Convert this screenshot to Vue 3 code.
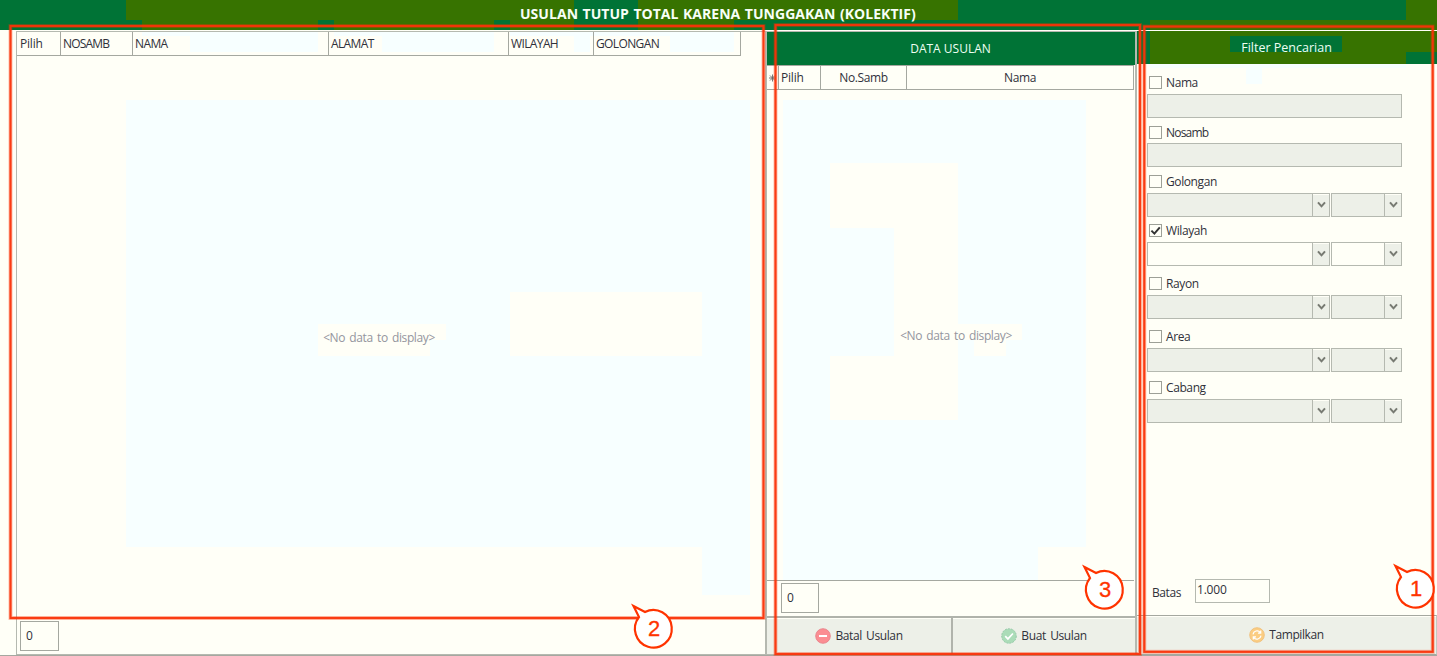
<script setup>
const columns = [
  { name: 'Pilih', cls: 'c-pilih' },
  { name: 'NOSAMB', cls: 'c-nosamb' },
  { name: 'NAMA', cls: 'c-nama' },
  { name: 'ALAMAT', cls: 'c-alamat' },
  { name: 'WILAYAH', cls: 'c-wilayah' },
  { name: 'GOLONGAN', cls: 'c-golongan' },
]

const filters = [
  { name: 'Nama', cls: 'f-nama', combo: false, checked: false },
  { name: 'Nosamb', cls: 'f-nosamb', combo: false, checked: false },
  { name: 'Golongan', cls: 'f-golongan', combo: true, checked: false },
  { name: 'Wilayah', cls: 'f-wilayah', combo: true, checked: true },
  { name: 'Rayon', cls: 'f-rayon', combo: true, checked: false },
  { name: 'Area', cls: 'f-area', combo: true, checked: false },
  { name: 'Cabang', cls: 'f-cabang', combo: true, checked: false },
]

// Background tint areas: x, y, width, height
const olive = [
  [126, 0, 448, 20], [142, 20, 176, 10], [334, 20, 160, 10], [510, 20, 64, 10],
  [638, 0, 320, 20], [638, 20, 96, 10], [1406, 0, 31, 20], [1150, 20, 287, 10],
  [1150, 31, 80, 33], [1230, 31, 112, 5], [1230, 52, 112, 12],
  [1342, 31, 64, 33], [1406, 31, 31, 21],
]
const ice = [
  [126, 100, 624, 447], [702, 547, 48, 48],
  [142, 32, 176, 4], [190, 36, 128, 16], [334, 32, 160, 4], [382, 36, 112, 16],
  [510, 32, 224, 4], [574, 36, 16, 16], [670, 36, 64, 16],
  [783, 100, 303, 447], [783, 547, 255, 33],
  [1150, 64, 256, 4], [1246, 68, 16, 16],
]
const cream = [
  [510, 292, 192, 64], [318, 324, 128, 16], [318, 340, 112, 16],
  [830, 163, 128, 65], [894, 228, 64, 128], [830, 356, 128, 64],
  [958, 324, 64, 16], [974, 340, 32, 16],
]

const frames = [
  [10.5, 26, 753, 592],
  [775.5, 25, 364.5, 629],
  [1144.3, 26.5, 288.4, 625.3],
]
const callouts = [
  { n: '2', x: 654, y: 628 },
  { n: '3', x: 1105, y: 589 },
  { n: '1', x: 1416, y: 588 },
]
</script>

<template>
  <div class="app">
    <svg class="layer tints" width="1437" height="656" shape-rendering="crispEdges">
      <rect width="1437" height="30" fill="#007336" />
      <rect x="1137" y="31" width="300" height="33" fill="#007336" />
      <rect v-for="(r, i) in olive" :key="'o' + i" :x="r[0]" :y="r[1]" :width="r[2]" :height="r[3]" fill="#377300" />
      <rect v-for="(r, i) in ice" :key="'i' + i" :x="r[0]" :y="r[1]" :width="r[2]" :height="r[3]" fill="#f7ffff" />
      <rect v-for="(r, i) in cream" :key="'c' + i" :x="r[0]" :y="r[1]" :width="r[2]" :height="r[3]" fill="#fffff7" />
    </svg>

    <header class="title"><span>USULAN TUTUP TOTAL KARENA TUNGGAKAN (KOLEKTIF)</span></header>

    <main class="body">
      <section class="left">
        <div class="thead">
          <div v-for="c in columns" :key="c.name" class="th" :class="c.cls"><span>{{ c.name }}</span></div>
        </div>
        <div class="empty"><span>&lt;No data to display&gt;</span></div>
        <div class="lfoot"><div class="count">0</div></div>
      </section>

      <section class="middle">
        <h2 class="mtitle"><span>DATA USULAN</span></h2>
        <div class="mhead">
          <div class="mh mark">
            <svg width="7" height="8" viewBox="0 0 7 8"><path d="M3.5 .5v7M0 4h7M1 1.5l5 5M6 1.5l-5 5" stroke="#666" stroke-width=".9" fill="none" /></svg>
          </div>
          <div class="mh mp"><span>Pilih</span></div>
          <div class="mh ms"><span>No.Samb</span></div>
          <div class="mh mn"><span>Nama</span></div>
        </div>
        <div class="empty mempty"><span>&lt;No data to display&gt;</span></div>
        <div class="mfoot"><div class="count">0</div></div>
        <div class="actions">
          <button class="btn batal">
            <svg width="16" height="16" viewBox="0 0 16 16">
              <circle cx="8" cy="8" r="7.3" fill="#fb8d92" stroke="#e8828a" stroke-width=".9" />
              <path d="M4 8h8" stroke="#fff" stroke-width="2" />
            </svg>
            <span>Batal Usulan</span>
          </button>
          <button class="btn buat">
            <svg width="16" height="16" viewBox="0 0 16 16">
              <circle cx="8" cy="8" r="7.3" fill="#abdcb8" stroke="#8fc6a4" stroke-width=".9" stroke-dasharray="2 1" />
              <path d="M4.2 8.2l2.7 2.7 5-5.4" stroke="#fff" stroke-width="1.7" fill="none" />
            </svg>
            <span>Buat Usulan</span>
          </button>
        </div>
      </section>

      <section class="right">
        <h2 class="rtitle"><span>Filter Pencarian</span></h2>
        <div class="filters">
          <div v-for="f in filters" :key="f.name" class="filter" :class="[f.cls, { on: f.checked }]">
            <label class="check">
              <i class="box">
                <svg v-if="f.checked" width="11" height="11" viewBox="0 0 11 11"><path d="M1.4 5.6l3 3L9.8 2.4" stroke="#333" stroke-width="2" fill="none" /></svg>
              </i>
              <span>{{ f.name }}</span>
            </label>
            <div v-if="!f.combo" class="field"></div>
            <div v-else class="combos">
              <div v-for="k in 2" :key="k" class="combo" :class="'k' + k">
                <div class="val"></div>
                <div class="drop">
                  <svg width="9" height="8" viewBox="0 0 9 8"><path d="M1 1.3l3.5 4L8 1.3" stroke="#777a72" stroke-width="2" fill="none" /></svg>
                </div>
              </div>
            </div>
          </div>
        </div>
        <div class="limit">
          <span class="lbl">Batas</span>
          <div class="num"><span>1.000</span></div>
        </div>
        <button class="btn tampil">
          <svg width="16" height="16" viewBox="0 0 16 16">
            <circle cx="8" cy="8" r="7.3" fill="#fbcd82" stroke="#efc07a" stroke-width=".9" />
            <path d="M4 7.4a4.1 4.1 0 0 1 7.3-1.9M12 8.6a4.1 4.1 0 0 1-7.3 1.9M11.7 3.4v2.7H9M4.3 12.6V9.9H7" stroke="#fff" stroke-width="1.2" fill="none" />
          </svg>
          <span>Tampilkan</span>
        </button>
      </section>
    </main>

    <svg class="layer marks" width="1437" height="656">
      <g v-for="(f, i) in frames" :key="'f' + i" fill="none">
        <rect :x="f[0]" :y="f[1]" :width="f[2]" :height="f[3]" stroke="#ff3300" stroke-opacity=".3" stroke-width="4" />
        <rect :x="f[0]" :y="f[1]" :width="f[2]" :height="f[3]" stroke="#fa3208" stroke-opacity=".93" stroke-width="2.2" />
      </g>
      <g v-for="c in callouts" :key="c.n" :transform="`translate(${c.x} ${c.y})`">
        <path d="M-20.5 -22L-9 -16A18.4 18.8 0 1 1 -15 -11Z" fill="#fff" stroke="#ff3300" stroke-width="2.2" />
        <text x="0" y="7.8" text-anchor="middle" class="cnum">{{ c.n }}</text>
      </g>
    </svg>
  </div>
</template>

<style>
body { background: #fffff7; overflow: hidden; }
</style>

<style scoped>
* { box-sizing: border-box; }
.app {
  position: relative; isolation: isolate; width: 1437px; height: 656px;
  display: flex; flex-direction: column; overflow: hidden; background: #fffff7;
  color: #30313a; font: 12px/16px "Open Sans", "Noto Sans", sans-serif;
  letter-spacing: -.4px; word-spacing: 1.6px;
}
.layer { position: absolute; left: 0; top: 0; pointer-events: none; }
.tints { z-index: -1; }
.marks { z-index: 2; }
span { white-space: nowrap; }
h2 { margin: 0; font-size: 12px; font-weight: 400; color: #eefff2; letter-spacing: 0; word-spacing: 0; }
.title {
  height: 30px; flex: none; padding: 4px 0 0 520px; color: #f7fff7;
  font-size: 14px; font-weight: 700; line-height: 20px; letter-spacing: .04px; word-spacing: .8px;
}
.body {
  flex: 1; display: grid; grid-template-columns: 749px 372px 300px;
  padding-left: 16px; border-bottom: 1px solid #a5a8a0; margin-top: 1px;
}
.left, .middle, .right { display: flex; flex-direction: column; min-width: 0; }
.left { border: 1px solid #b5b9b0; border-right: 0; }
.thead { display: flex; height: 24px; flex: none; width: 724px; border-bottom: 1px solid #a5a8a0; letter-spacing: -.62px; }
.th { border-right: 1px solid #a5a8a0; padding: 4px 0 0 2px; }
.c-pilih { width: 44px; padding-left: 3px; letter-spacing: -.2px; }
.c-nosamb { width: 72px; letter-spacing: -.8px; }
.c-nama { width: 196px; }
.c-alamat { width: 180px; }
.c-wilayah { width: 85px; }
.c-golongan { width: 147px; }
.empty { flex: 1; display: flex; align-items: center; justify-content: center; color: #94959e; padding: 0 24px 2px 0; }
.lfoot { height: 33px; flex: none; padding-left: 3px; }
.count { width: 39px; height: 30px; border: 1px solid #a5a8a0; padding: 6px 0 0 5px; }
.middle { border: solid #b5b9b0; border-width: 1px 2px 1px 2px; }
.mtitle { height: 33px; flex: none; background: #007336; display: flex; justify-content: center; padding: 9px 1px 0 0; }
.mhead { height: 25px; flex: none; display: flex; width: 367px; border-top: 1px solid #a5a8a0; border-bottom: 1px solid #a5a8a0; }
.mh { border-right: 1px solid #a5a8a0; text-align: center; padding-top: 4px; }
.mark { width: 12px; }
.mp { width: 42px; text-align: left; padding-left: 2px; letter-spacing: -.2px; }
.ms { width: 86px; }
.mn { width: 227px; }
.mempty { padding: 1px 0 0 10px; }
.mfoot { height: 36px; flex: none; width: 367px; border-top: 1px solid #a5a8a0; padding: 2px 0 0 14px; }
.mfoot .count { width: 38px; }
.actions { display: grid; grid-template-columns: 186px 1fr; height: 38px; flex: none; border-top: 2px solid #b0b3ab; }
.btn {
  display: flex; align-items: center; justify-content: center; gap: 4px; border: 0; margin: 0; padding: 0 0 1px;
  background: #edf0e8; font: inherit; color: inherit; letter-spacing: inherit; word-spacing: inherit; box-shadow: inset 0 1px #fffff7;
}
.batal { border-right: 2px solid #b0b3ab; }
.rtitle { height: 33px; flex: none; display: flex; justify-content: center; padding: 9px 1px 0 0; font-size: 12.5px; }
.filters { display: grid; grid-template-rows: 50px 49px 49px 53px 53px 51px 42px; padding: 12px 0 0 10px; flex: 1; align-content: start; }
.check { display: flex; align-items: center; height: 13px; gap: 4px; padding-left: 2px; }
.check span { padding-top: 1px; }
.f-nosamb .check { letter-spacing: -.8px; }
.box { width: 13px; height: 13px; border: 1px solid #9da097; display: block; }
.box svg { display: block; }
.field { width: 255px; height: 24px; border: 1px solid #b5b9b0; background: #edf0e8; margin-top: 5px; }
.f-nosamb .field { margin-top: 4px; }
.combos { display: flex; gap: 1px; margin-top: 5px; }
.combo { display: flex; height: 24px; border: 1px solid #b5b9b0; }
.k1 { width: 183px; }
.k2 { width: 71px; }
.val { flex: 1; background: #edf0e8; }
.on .val { background: none; }
.drop {
  width: 17px; border-left: 1px solid #b5b9b0; background: #edf0e8; box-shadow: inset 0 1px #fffff7;
  display: flex; align-items: center; justify-content: center;
}
.limit { display: flex; height: 36px; flex: none; padding-left: 15px; }
.lbl { width: 43px; padding-top: 6px; }
.num { width: 75px; height: 24px; border: 1px solid #b5b9b0; padding: 2px 0 0 1px; letter-spacing: -.2px; }
.tampil { height: 40px; flex: none; border: 1px solid #a5a8a0; border-left: 0; border-right-color: #c5c8c0; }
.cnum { font: 22px "Liberation Sans", Arial, sans-serif; letter-spacing: 0; fill: #ff3300; stroke: #ff3300; stroke-width: .3px; }
</style>
